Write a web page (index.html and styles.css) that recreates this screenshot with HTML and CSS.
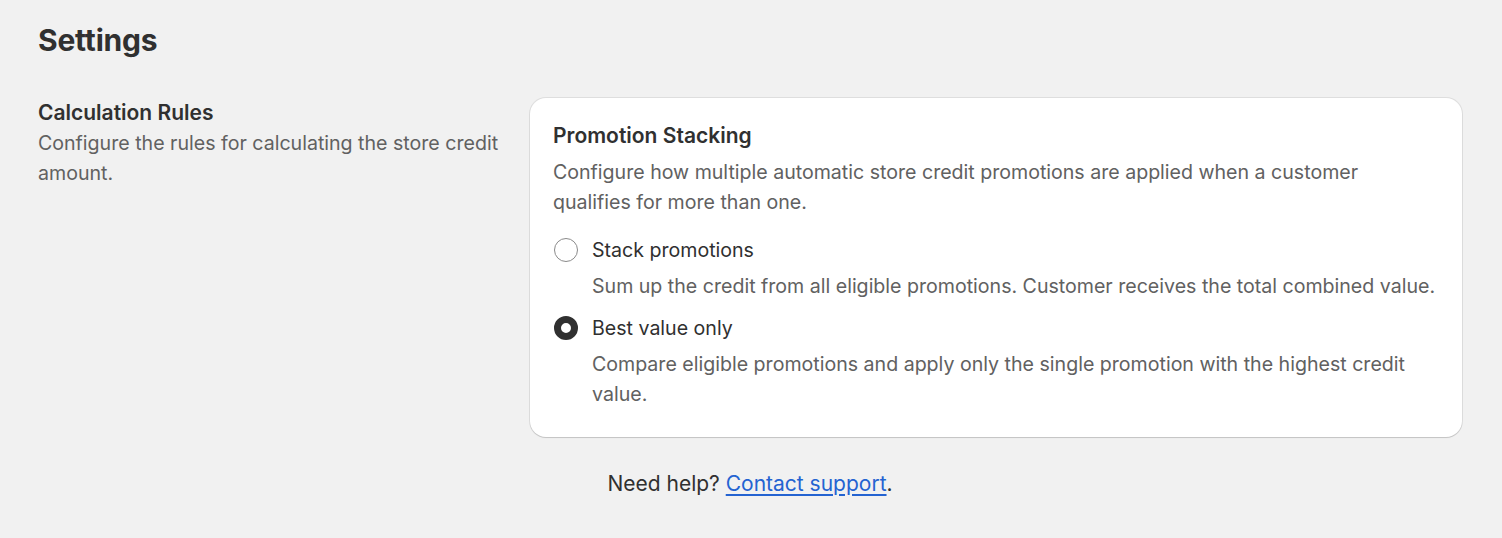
FILE: index.html
```html
<!DOCTYPE html>
<html lang="en">
<head>
<meta charset="utf-8">
<link rel="stylesheet" href="styles.css">
<title>Settings</title>
</head>
<body>
<main class="page">
  <h1 class="page-title">Settings</h1>
  <section class="layout">
    <div class="annotation">
      <h2 class="annotation-title">Calculation Rules</h2>
      <p class="annotation-desc">Configure the rules for calculating the store credit amount.</p>
    </div>
    <div class="card">
      <h3 class="card-title">Promotion Stacking</h3>
      <p class="card-desc">Configure how multiple automatic store credit promotions are applied when a customer qualifies for more than one.</p>
      <div class="choices">
        <label class="choice">
          <span class="choice-row">
            <span class="radio"></span>
            <span class="choice-label">Stack promotions</span>
          </span>
          <span class="choice-help">Sum up the credit from all eligible promotions. Customer receives the total combined value.</span>
        </label>
        <label class="choice">
          <span class="choice-row">
            <span class="radio radio-checked"></span>
            <span class="choice-label">Best value only</span>
          </span>
          <span class="choice-help">Compare eligible promotions and apply only the single promotion with the highest credit value.</span>
        </label>
      </div>
    </div>
  </section>
  <p class="footer-help">Need help? <a href="#" class="link">Contact support</a>.</p>
</main>
</body>
</html>
```
FILE: styles.css
```css
* { box-sizing: border-box; }
html, body { margin: 0; padding: 0; }
body {
  background: #f1f1f1;
  font-family: Inter, "Noto Sans", sans-serif;
  color: #303030;
  font-size: 19.58px;
  line-height: 30px;
}
.page {
  padding: 20px 40px 30px 38px;
}
.page-title {
  margin: 0;
  font-size: 30px;
  line-height: 40px;
  font-weight: 700;
  letter-spacing: -0.2px;
}
.layout {
  display: grid;
  grid-template-columns: 468px 1fr;
  column-gap: 24px;
  margin-top: 38px;
}
.annotation-title {
  margin: 0;
  font-size: 21px;
  line-height: 30px;
  font-weight: 600;
}
.annotation-desc {
  margin: 0;
  color: #616161;
}
.card {
  background: #fff;
  border-radius: 16px;
  padding: 23px 25px 28px 23px;
  box-shadow: 0 0 0 1px rgba(0,0,0,0.08), 0 1px 1px rgba(0,0,0,0.12);
}
.card-title {
  margin: 0 0 6px;
  font-size: 21px;
  line-height: 30px;
  font-weight: 600;
}
.card-desc {
  margin: 0;
  color: #616161;
}
.choices {
  display: flex;
  flex-direction: column;
  gap: 12px;
  margin-top: 18px;
}
.choice {
  display: flex;
  flex-direction: column;
}
.choice-row {
  display: flex;
  align-items: center;
  gap: 14px;
  height: 30px;
}
.radio {
  width: 24px;
  height: 24px;
  border-radius: 50%;
  border: 1px solid #8a8a8a;
  background: #fff;
  flex: none;
  margin-left: 1px;
}
.radio-checked {
  border: 7px solid #303030;
}
.choice-label {
  color: #303030;
}
.choice-help {
  margin-top: 6px;
  padding-left: 39px;
  color: #616161;
}
.footer-help {
  margin: 32px 0 0;
  text-align: center;
  font-size: 21px;
}
.link {
  color: #2463d1;
  text-decoration: underline;
  text-underline-offset: 3px;
}
```
